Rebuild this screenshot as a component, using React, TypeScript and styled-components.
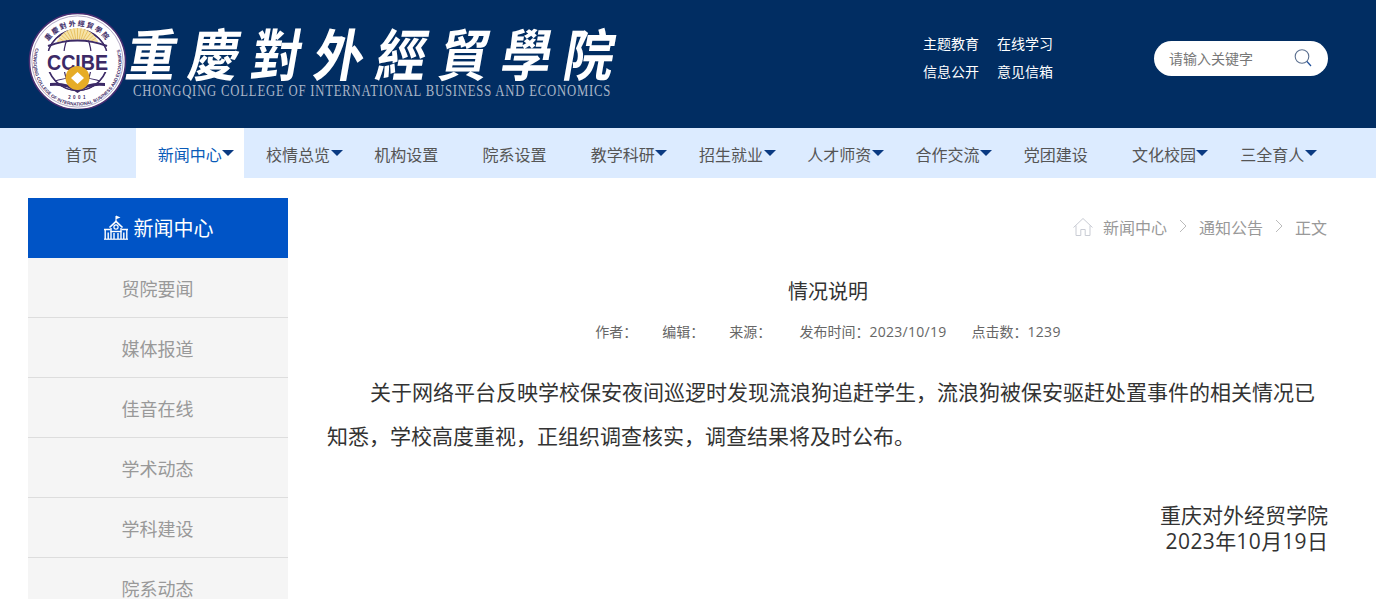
import React from "react";
import styled, { createGlobalStyle } from "styled-components";

const GlobalStyle = createGlobalStyle`
  html, body { margin: 0; padding: 0; height: 599px; overflow: hidden; background: #fff; }
  body { font-family: "Noto Sans CJK SC", "Liberation Sans", sans-serif; color: #333; }
  #root { height: 599px; overflow: hidden; }
  * { box-sizing: border-box; }
`;

const Header = styled.header`
  height: 128px;
  background: #012d62;
  display: flex;
  align-items: center;
  justify-content: space-between;
  padding: 0 48px 0 28px;
`;
const Brand = styled.div`
  display: flex;
  align-items: flex-start;
  height: 128px;
`;
const Emblem = styled.svg`
  width: 100px;
  height: 96px;
  margin-top: 13px;
  flex: none;
`;
const BrandText = styled.div`
  display: flex;
  flex-direction: column;
`;
const BrandTitle = styled.div`
  font-family: "Noto Sans CJK TC", "Noto Sans CJK SC", sans-serif;
  font-weight: 700;
  font-size: 50px;
  line-height: 60px;
  letter-spacing: 12.5px;
  color: #fff;
  white-space: nowrap;
  margin-top: 21px;
  transform: skewX(-10deg) scaleY(1.12);
  transform-origin: left center;
`;
const BrandSub = styled.div`
  font-family: "Liberation Serif", serif;
  font-size: 16px;
  line-height: 18px;
  letter-spacing: 1px;
  color: #a9b5c7;
  white-space: nowrap;
  margin: 1px 0 0 5px;
  transform: scaleX(0.794);
  transform-origin: left center;
`;
const Tools = styled.div`
  display: flex;
  align-items: center;
  gap: 101px;
  margin-top: -14px;
`;
const QuickLinks = styled.div`
  display: grid;
  grid-template-columns: auto auto;
  column-gap: 18px;
`;
const QuickLink = styled.a`
  font-size: 14px;
  line-height: 28px;
  color: #fff;
  white-space: nowrap;
`;
const Search = styled.div`
  width: 174px;
  height: 35px;
  border-radius: 18px;
  background: #fff;
  display: flex;
  align-items: center;
  justify-content: space-between;
  padding: 0 15px;
  margin-top: 2px;
`;
const SearchHint = styled.span`
  font-size: 14px;
  color: #777;
`;
const Nav = styled.nav`
  height: 50px;
  background: #dcebff;
  padding: 0 0 0 28px;
  display: grid;
  grid-template-columns: repeat(12, 108.24px);
`;
const NavItem = styled.a<{ $active?: boolean; $caret?: boolean }>`
  position: relative;
  display: block;
  text-align: center;
  font-size: 16px;
  line-height: 52px;
  height: 50px;
  text-indent: -1px;
  color: ${(p) => (p.$active ? "#0a5bb8" : "#555")};
  background: ${(p) => (p.$active ? "#fff" : "transparent")};
  &::after {
    content: "";
    display: ${(p) => (p.$caret ? "block" : "none")};
    position: absolute;
    left: calc(50% + 32px);
    top: 22px;
    border-style: solid;
    border-width: 6px 6px 0 6px;
    border-color: #0a3a82 transparent transparent transparent;
  }
`;
const Body = styled.div`
  display: flex;
  align-items: flex-start;
  gap: 40px;
  padding: 20px 48px 0 28px;
`;
const Side = styled.aside`
  width: 260px;
  flex: none;
`;
const SideHead = styled.div`
  height: 60px;
  padding-bottom: 2px;
  background: #0054c6;
  color: #fff;
  font-size: 20px;
  display: flex;
  align-items: center;
  justify-content: center;
  gap: 5px;
  margin-left: 0;
`;
const SideItem = styled.a`
  display: block;
  height: 60px;
  line-height: 60px;
  background: #f5f5f5;
  border-bottom: 1px solid #ddd;
  text-align: center;
  text-indent: -1px;
  font-size: 18px;
  color: #999;
`;
const Main = styled.main`
  flex: 1;
  min-width: 0;
`;
const Crumbs = styled.div`
  height: 60px;
  padding: 0 1px 2px 0;
  display: flex;
  align-items: center;
  justify-content: flex-end;
  font-size: 16px;
  color: #999;
`;
const CrumbSep = styled.svg`
  width: 10px;
  height: 14px;
  margin: -2px 11px 0;
`;
const HomeIcon = styled.svg`
  width: 20px;
  height: 20px;
  margin-right: 10px;
`;
const Title = styled.h1`
  margin: 18px 0 0;
  font-size: 20px;
  font-weight: 400;
  line-height: 30px;
  text-align: center;
  color: #333;
`;
const Meta = styled.div`
  margin-top: 15px;
  display: flex;
  justify-content: center;
  gap: 25px;
  font-size: 14px;
  line-height: 20px;
  color: #666;
  white-space: pre;
`;
const Num = styled.span`
  font-family: "Open Sans", sans-serif;
  letter-spacing: 0.02em;
`;
const Paragraph = styled.p`
  margin: 27px 0 0 -1px;
  font-size: 21px;
  line-height: 44px;
  text-indent: calc(2em + 1px);
  color: #333;
`;
const Signature = styled.div`
  margin-top: 44px;
  font-size: 21px;
  line-height: 26px;
  text-align: right;
  color: #333;
`;

const navItems: [string, boolean][] = [
  ["首页", false], ["新闻中心", true], ["校情总览", true], ["机构设置", false],
  ["院系设置", false], ["教学科研", true], ["招生就业", true], ["人才师资", true],
  ["合作交流", true], ["党团建设", false], ["文化校园", true], ["三全育人", true],
];
const sideItems = ["贸院要闻", "媒体报道", "佳音在线", "学术动态", "学科建设", "院系动态"];

const CrestEmblem = () => (
  <Emblem viewBox="0 0 100 96" aria-label="CCIBE">
    <defs>
      <path id="ringTop" d="M 14 48.5 A 35.5 35.5 0 0 1 85 48.5" />
      <path id="ringBottom" d="M 8.2 33.5 A 44 44 0 1 0 90.8 33.5" />
      <clipPath id="sunClip"><path d="M22 31 Q49.5 22 77 31 L77 10 L22 10 Z" /></clipPath>
      <clipPath id="globeClip"><circle cx="49.5" cy="47" r="31" /></clipPath>
    </defs>
    <circle cx="49.5" cy="48.5" r="48" fill="#fff" stroke="#4a2f73" strokeWidth="1.6" />
    <circle cx="49.5" cy="48.5" r="45.6" fill="none" stroke="#7d6d9c" strokeWidth="0.6" />
    <text fontFamily="Noto Sans CJK TC, sans-serif" fontSize="7" fontWeight="700" fill="#3c2a66" letterSpacing="1.6" textAnchor="middle">
      <textPath href="#ringTop" startOffset="50%">重慶對外經貿學院</textPath>
    </text>
    <text fontFamily="Liberation Sans, sans-serif" fontSize="4.6" fontWeight="700" fill="#3c2a66" textLength="164">
      <textPath href="#ringBottom" startOffset="1%" textLength="164">CHONGQING COLLEGE OF INTERNATIONAL BUSINESS AND ECONOMICS</textPath>
    </text>
    <g fill="none" stroke="#3c2a66" clipPath="url(#globeClip)">
      <circle cx="49.5" cy="47" r="31" fill="#fff" />
      <ellipse cx="49.5" cy="47" rx="14" ry="31" strokeWidth="1.2" />
      <path d="M24 69 Q49.5 60 75 69" strokeWidth="1.2" />
    </g>
    <circle cx="49.5" cy="47" r="30.4" fill="none" stroke="#3c2a66" strokeWidth="1.6" />
    <g clipPath="url(#sunClip)">
      <circle cx="49.5" cy="37" r="22" fill="#f6e3a6" />
      <g stroke="#e2b447" strokeWidth="0.7">
        {Array.from({ length: 19 }).map((_, i) => {
          const a = (Math.PI * (i + 0.5)) / 19;
          return <line key={i} x1={49.5} y1={37} x2={49.5 - 22 * Math.cos(a)} y2={37 - 22 * Math.sin(a)} />;
        })}
      </g>
    </g>
    <path d="M20 33 Q49.5 22 79 33" fill="none" stroke="#3c2a66" strokeWidth="2.2" />
    <rect x="18" y="38" width="64" height="21" fill="#fff" />
    <text x="49.5" y="56.5" textAnchor="middle" fontFamily="Liberation Sans, sans-serif" fontWeight="700" fontSize="22" fill="#3c2a66" textLength="61" lengthAdjust="spacingAndGlyphs">CCIBE</text>
    <path d="M22 70 Q38 68 49.5 77 Q61 68 77 70 L77 73 Q61 71 49.5 80 Q38 71 22 73 Z" fill="#3c2a66" />
    <circle cx="49.5" cy="65" r="12" fill="#e6ac26" />
    <path d="M49.5 59 L56 65 L49.5 71 L43 65 Z" fill="#fff" />
    <text x="50" y="86" textAnchor="middle" fontFamily="Liberation Sans, sans-serif" fontSize="4.5" fontWeight="700" fill="#3c2a66" letterSpacing="2.4">2001</text>
  </Emblem>
);

const SchoolIcon = () => (
  <svg width="26" height="25" viewBox="0 0 26 25" fill="none" stroke="#fff" strokeWidth="1.4">
    <path d="M13 7 V1" strokeWidth="1.1" />
    <path d="M13 .6 L17.5 2.4 L13 4.2 Z" fill="#fff" stroke="none" />
    <path d="M6.5 12.5 L13 6.5 L19.5 12.5" strokeWidth="1.7" />
    <circle cx="13" cy="12" r="2.1" strokeWidth="1.2" />
    <path d="M1 14.5 H7.5 M18.5 14.5 H25" strokeWidth="1.7" />
    <path d="M7.5 16.5 H18.5" strokeWidth="1.4" />
    <path d="M2.2 24 V15 M5.2 24 V17.5 M8 24 V13 M11 24 V18 M15 24 V18 M18 24 V13 M20.8 24 V17.5 M23.8 24 V15" />
    <path d="M1 24.2 H25" strokeWidth="1.2" />
  </svg>
);

export default function App() {
  return (
    <>
      <GlobalStyle />
      <Header>
        <Brand>
          <CrestEmblem />
          <BrandText>
            <BrandTitle>重慶對外經貿學院</BrandTitle>
            <BrandSub>CHONGQING COLLEGE OF INTERNATIONAL BUSINESS AND ECONOMICS</BrandSub>
          </BrandText>
        </Brand>
        <Tools>
          <QuickLinks>
            <QuickLink>主题教育</QuickLink>
            <QuickLink>在线学习</QuickLink>
            <QuickLink>信息公开</QuickLink>
            <QuickLink>意见信箱</QuickLink>
          </QuickLinks>
          <Search>
            <SearchHint>请输入关键字</SearchHint>
            <svg width="20" height="20" viewBox="0 0 20 20" fill="none" strokeWidth="1.1">
              <circle cx="9" cy="8.5" r="6.8" stroke="#5b6f8f" />
              <path d="M14 13.5 L18 18" stroke="#1f4f9a" strokeWidth="1.2" />
            </svg>
          </Search>
        </Tools>
      </Header>
      <Nav>
        {navItems.map(([label, caret], i) => (
          <NavItem key={label} $caret={caret} $active={i === 1}>{label}</NavItem>
        ))}
      </Nav>
      <Body>
        <Side>
          <SideHead>
            <SchoolIcon />
            新闻中心
          </SideHead>
          {sideItems.map((s) => (
            <SideItem key={s}>{s}</SideItem>
          ))}
        </Side>
        <Main>
          <Crumbs>
            <HomeIcon viewBox="0 0 20 20" fill="none" stroke="#c9ccd4" strokeWidth="1">
              <path d="M.5 10.5 L10 1.5 L19.5 10.5" />
              <path d="M3 8.5 V18.5 H7.8 V12.5 H12.2 V18.5 H17 V8.5" />
            </HomeIcon>
            新闻中心
            <CrumbSep viewBox="0 0 10 14" fill="none" stroke="#bbb" strokeWidth="1"><path d="M2 1 L8 7 L2 13" /></CrumbSep>
            通知公告
            <CrumbSep viewBox="0 0 10 14" fill="none" stroke="#bbb" strokeWidth="1"><path d="M2 1 L8 7 L2 13" /></CrumbSep>
            正文
          </Crumbs>
          <Title>情况说明</Title>
          <Meta>
            <span>作者：</span>
            <span>编辑：</span>
            <span>来源： </span>
            <span>发布时间：<Num>2023/10/19</Num></span>
            <span>点击数：<Num>1239</Num></span>
          </Meta>
          <Paragraph>
            关于网络平台反映学校保安夜间巡逻时发现流浪狗追赶学生，流浪狗被保安驱赶处置事件的相关情况已知悉，学校高度重视，正组织调查核实，调查结果将及时公布。
          </Paragraph>
          <Signature>
            重庆对外经贸学院
            <br />
            <Num>2023</Num>年<Num>10</Num>月<Num>19</Num>日
          </Signature>
        </Main>
      </Body>
    </>
  );
}
